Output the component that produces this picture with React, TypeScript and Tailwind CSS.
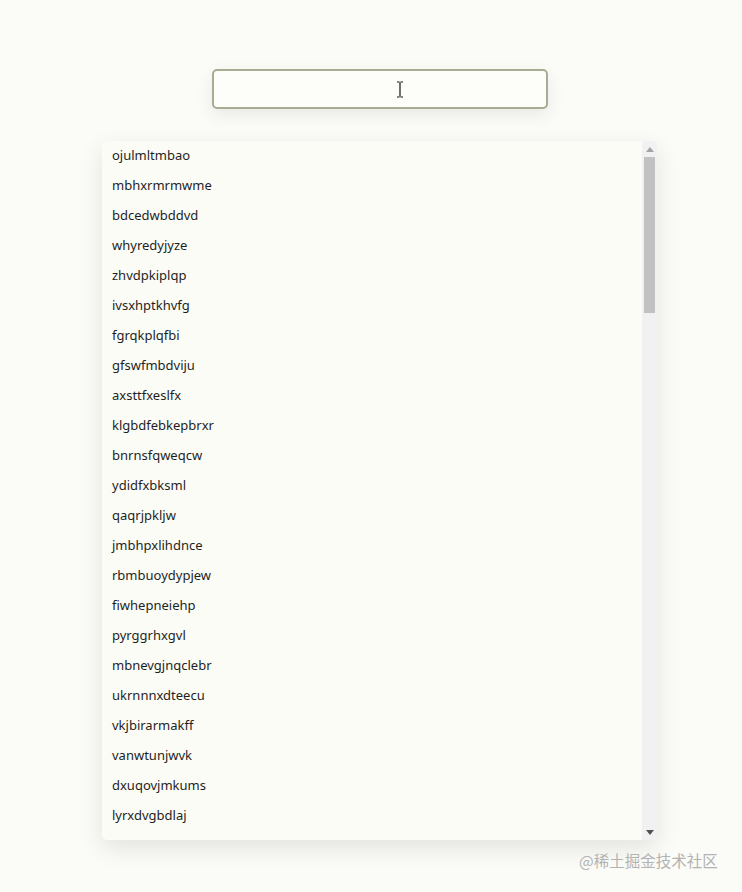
const items = [
  "ojulmltmbao",
  "mbhxrmrmwme",
  "bdcedwbddvd",
  "whyredyjyze",
  "zhvdpkiplqp",
  "ivsxhptkhvfg",
  "fgrqkplqfbi",
  "gfswfmbdviju",
  "axsttfxeslfx",
  "klgbdfebkepbrxr",
  "bnrnsfqweqcw",
  "ydidfxbksml",
  "qaqrjpkljw",
  "jmbhpxlihdnce",
  "rbmbuoydypjew",
  "fiwhepneiehp",
  "pyrggrhxgvl",
  "mbnevgjnqclebr",
  "ukrnnnxdteecu",
  "vkjbirarmakff",
  "vanwtunjwvk",
  "dxuqovjmkums",
  "lyrxdvgbdlaj",
];

export default function App() {
  return (
    <div className="relative flex min-h-[892px] flex-col items-center bg-[#fbfcf7] pl-[17px] font-['Noto_Sans',sans-serif] text-[#1f1f1f]">
      <div className="mt-[69px] flex h-[40px] w-[336px] items-center justify-center rounded-[5px] border-2 border-[#a8ac93] bg-[#fdfdf9] shadow-[0_6px_18px_rgba(0,0,0,0.08)]">
        <svg width="8" height="17" viewBox="0 0 8 17" className="ml-[40px]">
          <path d="M1 1h2.5M4.5 1H7M4 1.5v14M1 16h2.5M4.5 16H7" stroke="#111" strokeWidth="1.2" fill="none" />
        </svg>
      </div>

      <div className="mt-[32px] flex h-[699px] w-[555px] overflow-hidden rounded-[5px] bg-[#fbfcf6] shadow-[0_8px_24px_rgba(0,0,0,0.1)]">
        <ul className="-mt-[1px] flex-1 overflow-hidden pl-[10px]">
          {items.map((item) => (
            <li key={item} className="flex h-[30px] items-center text-[13px] leading-none">
              {item}
            </li>
          ))}
        </ul>
        <div className="flex w-[15px] flex-col bg-[#f1f1f1]">
          <div className="flex h-[16px] items-center justify-center">
            <svg width="8" height="5" viewBox="0 0 8 5">
              <path d="M0 5L4 0L8 5Z" fill="#a3a3a3" />
            </svg>
          </div>
          <div className="mx-[2px] h-[156px] bg-[#c1c1c1]" />
          <div className="flex-1" />
          <div className="flex h-[16px] items-center justify-center">
            <svg width="8" height="5" viewBox="0 0 8 5">
              <path d="M0 0L8 0L4 5Z" fill="#505050" />
            </svg>
          </div>
        </div>
      </div>

      <div className="absolute left-[579px] top-[849px] text-[15.5px] text-[#b3b3b3] font-['Noto_Sans_CJK_SC',sans-serif]">
        @稀土掘金技术社区
      </div>
    </div>
  );
}
